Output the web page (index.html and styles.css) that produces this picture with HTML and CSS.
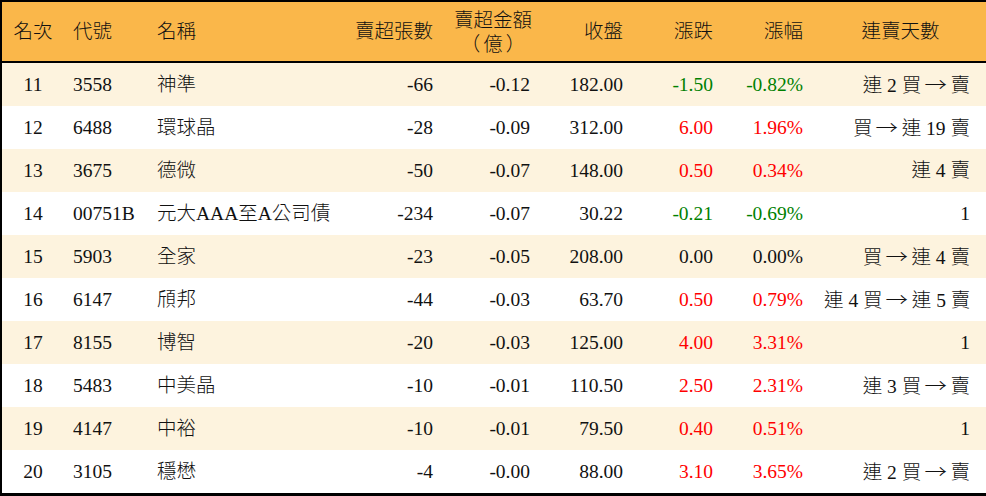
FILE: index.html
```html
<!DOCTYPE html>
<html lang="zh-Hant">
<head>
<meta charset="utf-8">
<link rel="stylesheet" href="styles.css">
</head>
<body>
<div class="frame">
<table class="rank">
<colgroup>
<col class="c1"><col class="c2"><col class="c3"><col class="c4"><col class="c5"><col class="c6"><col class="c7"><col class="c8"><col class="c9">
</colgroup>
<thead>
<tr>
<th class="ctr">名次</th>
<th class="lft">代號</th>
<th class="lft">名稱</th>
<th class="rgt">賣超張數</th>
<th class="rgt"><span class="two"><span class="l1">賣超金額</span><span class="paren">（億）</span></span></th>
<th class="rgt">收盤</th>
<th class="rgt">漲跌</th>
<th class="rgt">漲幅</th>
<th class="ctr">連賣天數</th>
</tr>
</thead>
<tbody>
<tr class="alt"><td class="ctr">11</td><td class="lft">3558</td><td class="lft">神準</td><td class="rgt">-66</td><td class="rgt">-0.12</td><td class="rgt">182.00</td><td class="rgt dn">-1.50</td><td class="rgt dn">-0.82%</td><td class="rgt">連 2 買 <span class="arw">→</span> 賣</td></tr>
<tr><td class="ctr">12</td><td class="lft">6488</td><td class="lft">環球晶</td><td class="rgt">-28</td><td class="rgt">-0.09</td><td class="rgt">312.00</td><td class="rgt up">6.00</td><td class="rgt up">1.96%</td><td class="rgt">買 <span class="arw">→</span> 連 19 賣</td></tr>
<tr class="alt"><td class="ctr">13</td><td class="lft">3675</td><td class="lft">德微</td><td class="rgt">-50</td><td class="rgt">-0.07</td><td class="rgt">148.00</td><td class="rgt up">0.50</td><td class="rgt up">0.34%</td><td class="rgt">連 4 賣</td></tr>
<tr><td class="ctr">14</td><td class="lft">00751B</td><td class="lft">元大AAA至A公司債</td><td class="rgt">-234</td><td class="rgt">-0.07</td><td class="rgt">30.22</td><td class="rgt dn">-0.21</td><td class="rgt dn">-0.69%</td><td class="rgt">1</td></tr>
<tr class="alt"><td class="ctr">15</td><td class="lft">5903</td><td class="lft">全家</td><td class="rgt">-23</td><td class="rgt">-0.05</td><td class="rgt">208.00</td><td class="rgt">0.00</td><td class="rgt">0.00%</td><td class="rgt">買 <span class="arw">→</span> 連 4 賣</td></tr>
<tr><td class="ctr">16</td><td class="lft">6147</td><td class="lft">頎邦</td><td class="rgt">-44</td><td class="rgt">-0.03</td><td class="rgt">63.70</td><td class="rgt up">0.50</td><td class="rgt up">0.79%</td><td class="rgt">連 4 買 <span class="arw">→</span> 連 5 賣</td></tr>
<tr class="alt"><td class="ctr">17</td><td class="lft">8155</td><td class="lft">博智</td><td class="rgt">-20</td><td class="rgt">-0.03</td><td class="rgt">125.00</td><td class="rgt up">4.00</td><td class="rgt up">3.31%</td><td class="rgt">1</td></tr>
<tr><td class="ctr">18</td><td class="lft">5483</td><td class="lft">中美晶</td><td class="rgt">-10</td><td class="rgt">-0.01</td><td class="rgt">110.50</td><td class="rgt up">2.50</td><td class="rgt up">2.31%</td><td class="rgt">連 3 買 <span class="arw">→</span> 賣</td></tr>
<tr class="alt"><td class="ctr">19</td><td class="lft">4147</td><td class="lft">中裕</td><td class="rgt">-10</td><td class="rgt">-0.01</td><td class="rgt">79.50</td><td class="rgt up">0.40</td><td class="rgt up">0.51%</td><td class="rgt">1</td></tr>
<tr><td class="ctr">20</td><td class="lft">3105</td><td class="lft">穩懋</td><td class="rgt">-4</td><td class="rgt">-0.00</td><td class="rgt">88.00</td><td class="rgt up">3.10</td><td class="rgt up">3.65%</td><td class="rgt">連 2 買 <span class="arw">→</span> 賣</td></tr>
</tbody>
</table>
</div>
</body>
</html>
```

FILE: styles.css
```css
html, body {
  margin: 0;
  padding: 0;
  background: #ffffff;
}
body {
  font-family: "Liberation Serif", "Noto Sans CJK TC", serif;
  font-size: 19.5px;
  font-weight: 300;
  color: #111111;
}
.frame {
  width: 984px;
  border-left: 2px solid #000;
  border-top: 2px solid #000;
  border-bottom: 3px solid #000;
}
.rank {
  width: 984px;
  table-layout: fixed;
  border-collapse: collapse;
  border-spacing: 0;
}
.c1 { width: 62px; }
.c2 { width: 84px; }
.c3 { width: 197px; }
.c4 { width: 100px; }
.c5 { width: 97px; }
.c6 { width: 93px; }
.c7 { width: 90px; }
.c8 { width: 90px; }
.c9 { width: 171px; }
thead th {
  background: #fab74a;
  height: 59px;
  font-weight: 300;
  border-bottom: 2px solid #000;
  padding: 0 12px 0 9px;
  line-height: 22px;
  white-space: nowrap;
}
.two {
  display: inline-flex;
  flex-direction: column;
  align-items: center;
}
.l1, .paren {
  display: block;
  line-height: 22px;
}
.paren {
  font-family: "Noto Sans CJK TC", sans-serif;
  letter-spacing: 3px;
  padding-left: 3px;
}
.arw {
  font-family: "Noto Sans CJK TC", sans-serif;
  display: inline-block;
  transform: scaleX(1.15);
}
tbody td {
  height: 43px;
  padding: 0 12px 0 9px;
  white-space: nowrap;
  line-height: 22px;
}
tbody tr.alt td {
  background: #fdf3de;
}
.ctr { text-align: center; padding-left: 0; padding-right: 0; }
.lft { text-align: left; }
.rgt { text-align: right; }
tbody td:last-child { padding-right: 16px; }
thead th:first-child, tbody td:first-child { padding-left: 0; padding-right: 0; }
.up { color: #ff0000; }
.dn { color: #008000; }
```
